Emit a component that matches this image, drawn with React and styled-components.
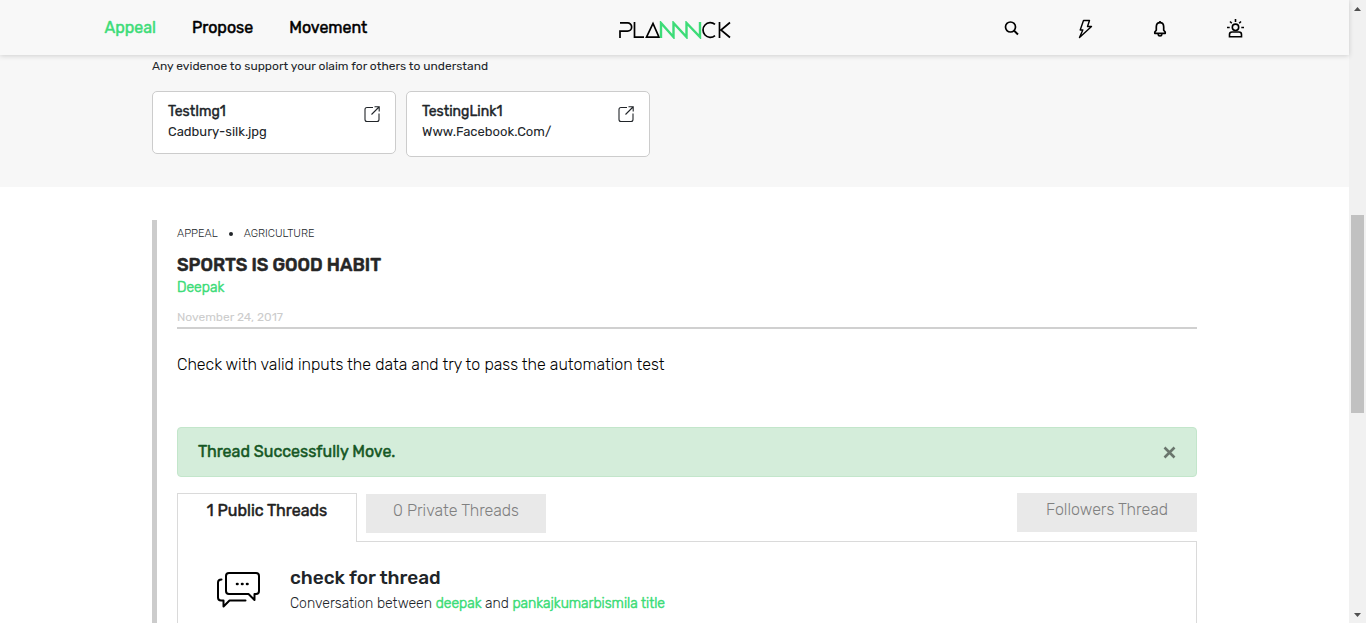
import React from "react";
import styled, { createGlobalStyle, css } from "styled-components";

const GlobalStyle = createGlobalStyle`
  *, *::before, *::after { box-sizing: border-box; }
  body {
    margin: 0;
    background: #fff;
    color: #212529;
    font-family: Rubik, Inter, Roboto, sans-serif;
    font-size: 16px;
    line-height: 24px;
  }
  h1, h2, h3, p { margin: 0; }
  a { color: inherit; text-decoration: none; }
  button { font: inherit; cursor: pointer; }
`;

const emphasis = css`
  font-weight: 400;
  -webkit-text-stroke: 0.03em currentColor;
`;

const lightEmphasis = css`
  font-weight: 300;
  -webkit-text-stroke: 0.04em currentColor;
`;

const Window = styled.div`
  display: flex;
  height: 100vh;
  overflow: hidden;
`;

const Page = styled.div`
  flex: 1;
  min-width: 0;
  display: flex;
  flex-direction: column;
`;

const Header = styled.header`
  flex: none;
  z-index: 1;
  background: #f8f8f8;
  box-shadow: 0 1px 5px rgba(0, 0, 0, 0.16);
`;

const HeaderInner = styled.div`
  display: grid;
  grid-template-columns: 1fr auto 1fr;
  align-items: center;
  max-width: 1140px;
  height: 55px;
  margin: 0 auto;
`;

const Nav = styled.nav`
  display: flex;
  gap: 36px;
`;

const NavLink = styled.a`
  color: ${(p) => (p.$active ? "#3ddc78" : "#000")};
  font-size: 16px;
  ${emphasis}
`;

const LogoLink = styled.a`
  display: flex;
  padding-top: 4px;
`;

const Tools = styled.div`
  display: flex;
  justify-content: flex-end;
  gap: 55px;
  padding-top: 2px;
`;

const IconButton = styled.button`
  display: flex;
  padding: 0;
  border: 0;
  background: none;
  color: #000;
`;

const Column = styled.div`
  max-width: 1045px;
  width: 100%;
  margin: 0 auto;
`;

const Evidence = styled.section`
  flex: none;
  padding-bottom: 30px;
  background: #f7f7f7;
`;

const Hint = styled.p`
  padding: 2px 0 16px;
  font-size: 12px;
  line-height: 18px;
`;

const Cards = styled.div`
  display: flex;
  align-items: flex-start;
  gap: 10px;
`;

const Card = styled.article`
  display: flex;
  justify-content: space-between;
  width: 244px;
  padding: ${(p) => (p.$tall ? "10px 15px 14px" : "10px 15px 11px")};
  border: 1px solid #ccc;
  border-radius: 5px;
  background: #fff;
`;

const CardTitle = styled.h3`
  font-size: 14px;
  line-height: 20px;
  ${emphasis}
`;

const CardText = styled.p`
  font-size: 13px;
  line-height: 20px;
`;

const OpenLink = styled.a`
  display: flex;
  padding-top: 3px;
`;

const Article = styled.article`
  flex: 1 0 auto;
  max-width: 1045px;
  width: 100%;
  margin: 33px auto 0;
  padding-left: 20px;
  border-left: 5px solid #ccc;
`;

const Crumbs = styled.div`
  display: flex;
  align-items: center;
  gap: 11px;
  padding-top: 6px;
  font-size: 11px;
  font-weight: 300;
  line-height: 16px;
`;

const Dot = styled.span`
  width: 4px;
  height: 4px;
  border-radius: 2px;
  background: #212529;
`;

const Title = styled.h1`
  padding-top: 11px;
  color: #262626;
  font-size: 18px;
  font-weight: 500;
  -webkit-text-stroke: 0.03em currentColor;
  line-height: 24px;
`;

const Author = styled.a`
  display: block;
  padding-top: 1px;
  color: #3ddc78;
  font-size: 14px;
  line-height: 20px;
  ${lightEmphasis}
`;

const PostDate = styled.time`
  display: block;
  padding: 10px 0 1px;
  border-bottom: 2px solid #d0d0d0;
  color: #ccc;
  font-size: 12px;
  line-height: 18px;
`;

const Body = styled.p`
  padding: 24px 0 50px;
  color: #000;
  font-size: 16px;
  font-weight: 300;
`;

const Alert = styled.div`
  display: flex;
  align-items: center;
  justify-content: space-between;
  height: 50px;
  margin-bottom: 16px;
  padding: 0 20px;
  border: 1px solid #c3e6cb;
  border-radius: 4px;
  background: #d4edda;
  color: #155724;
  ${emphasis}
`;

const Close = styled.button`
  display: flex;
  padding: 0;
  border: 0;
  background: none;
  color: #6a766d;
`;

const Tabs = styled.div`
  display: flex;
  align-items: flex-start;
  gap: 9px;
`;

const Tab = styled.button`
  width: 180px;
  height: ${(p) => (p.$active ? "49px" : "39px")};
  margin: ${(p) => (p.$active ? "0 0 -1px" : p.$end ? "0 0 0 auto" : "1px 0 0")};
  padding: ${(p) => (p.$active ? "5px 0 19px" : "5px 0 10px")};
  border: ${(p) => (p.$active ? "1px solid #dadada" : "0")};
  border-bottom: 0;
  background: ${(p) => (p.$active ? "#fff" : "#e9e9e9")};
  color: ${(p) => (p.$active ? "#212121" : "#808080")};
  font-weight: 300;
  z-index: ${(p) => (p.$active ? 1 : 0)};
  ${(p) => p.$active && emphasis}
`;

const Panel = styled.div`
  display: flex;
  gap: 29px;
  min-height: 160px;
  padding: 22px 39px;
  border: 1px solid #dadada;
`;

const ChatIcon = styled.svg`
  flex: none;
  margin-top: 8px;
`;

const ThreadTitle = styled.h2`
  font-size: 19px;
  font-weight: 500;
  line-height: 28px;
`;

const ThreadText = styled.p`
  color: #212529;
  font-size: 14px;
  font-weight: 300;
`;

const Person = styled.a`
  color: #3ddc78;
  ${lightEmphasis}
`;

const ScrollBar = styled.div`
  flex: none;
  display: flex;
  flex-direction: column;
  justify-content: space-between;
  align-items: center;
  width: 17px;
  background: #f1f1f1;
`;

const Thumb = styled.div`
  width: 13px;
  height: 198px;
  margin-top: 4px;
  background: #c1c1c1;
`;

const Arrow = styled.svg`
  display: block;
`;

function Logo() {
  return (
    <svg width="112" height="18" viewBox="0 0 112 18" fill="none" strokeWidth="1.7" role="img" aria-label="Plannnck">
      <g stroke="#000">
        <path d="M1 17V10.200H8.500a4 4 0 0 0 0-8.300H1" />
        <path d="M15.500 1V16.200H25" />
        <path d="M27.500 16.200L34 2.500L40 16.200Z" />
        <path d="M96 3.400A7.300 7.300 0 1 0 96 14.600" />
        <path d="M100.500 1V17M111 1.500L102 9L111 16.500" />
      </g>
      <path stroke="#3ddc78" strokeWidth="2.400" d="M42 17V2L54.500 16V2L67.500 16V2L81 16V1" />
    </svg>
  );
}

function SearchIcon() {
  return (
    <svg width="20" height="20" viewBox="0 0 20 20" fill="none" stroke="currentColor" strokeWidth="1.700">
      <circle cx="10.500" cy="8" r="5" />
      <path d="M14 11.600L18 15.500" strokeWidth="2" />
    </svg>
  );
}

function BoltIcon() {
  return (
    <svg width="20" height="20" viewBox="0 0 20 20" fill="none" stroke="currentColor" strokeWidth="1.400" strokeLinejoin="round">
      <path d="M8.500 1.500H14.500L12.500 7.500H16.500L4.500 18.500L7.800 11H5.200Z" />
    </svg>
  );
}

function BellIcon() {
  return (
    <svg width="20" height="20" viewBox="0 0 20 20" fill="none" stroke="currentColor" strokeWidth="1.700" strokeLinejoin="round">
      <path d="M4.800 14.300V13L6.300 11.300V8C6.300 5.200 7.800 3.700 10 3.700S13.700 5.200 13.700 8V11.300L15.200 13V14.300Z" />
      <path d="M8 15.200Q8.300 17 10 17T12 15.200" />
      <path d="M10 2V4" />
    </svg>
  );
}

function ProfileIcon() {
  return (
    <svg width="20" height="20" viewBox="0 0 20 20" fill="none" stroke="currentColor" strokeWidth="1.600">
      <circle cx="10.500" cy="8.300" r="3.200" />
      <path d="M4.500 17.800V15.500Q4.500 13 7 13H14Q16.500 13 16.500 15.500V17.800Z" />
      <path d="M10.500 0V3M5 2.500L6.800 4.300M16 2.500L14.200 4.300M2 8.500H4.700M16.300 8.500H19" />
    </svg>
  );
}

function OpenIcon() {
  return (
    <svg width="16" height="18" viewBox="0 0 16 18" fill="none" stroke="#212529" strokeWidth="1.100">
      <path d="M9 2.500H3Q1 2.500 1 4.500V14.500Q1 16.500 3 16.500H13Q15 16.500 15 14.500V8.500" />
      <path d="M7.500 9.500L15 2M10.500 1.800H15.200V6.500" />
    </svg>
  );
}

const evidence = [
  { title: "TestImg1", text: "Cadbury-silk.jpg" },
  { title: "TestingLink1", text: "Www.Facebook.Com/", tall: true },
];

export default function App() {
  return (
    <Window>
      <GlobalStyle />
      <Page>
        <Header>
          <HeaderInner>
            <Nav>
              <NavLink href="#appeal" $active>Appeal</NavLink>
              <NavLink href="#propose">Propose</NavLink>
              <NavLink href="#movement">Movement</NavLink>
            </Nav>
            <LogoLink href="#home"><Logo /></LogoLink>
            <Tools>
              <IconButton aria-label="Search"><SearchIcon /></IconButton>
              <IconButton aria-label="Activity"><BoltIcon /></IconButton>
              <IconButton aria-label="Notifications"><BellIcon /></IconButton>
              <IconButton aria-label="Profile"><ProfileIcon /></IconButton>
            </Tools>
          </HeaderInner>
        </Header>

        <Evidence>
          <Column>
            <Hint>Any evidenoe to support your olaim for others to understand</Hint>
            <Cards>
              {evidence.map((e) => (
                <Card key={e.title} $tall={e.tall}>
                  <div>
                    <CardTitle>{e.title}</CardTitle>
                    <CardText>{e.text}</CardText>
                  </div>
                  <OpenLink href="#open" aria-label={"Open " + e.title}><OpenIcon /></OpenLink>
                </Card>
              ))}
            </Cards>
          </Column>
        </Evidence>

        <Article>
          <Crumbs>
            <span>APPEAL</span>
            <Dot />
            <span>AGRICULTURE</span>
          </Crumbs>
          <Title>SPORTS IS GOOD HABIT</Title>
          <Author href="#deepak">Deepak</Author>
          <PostDate dateTime="2017-11-24">November 24, 2017</PostDate>
          <Body>Check with valid inputs the data and try to pass the automation test</Body>

          <Alert role="alert">
            <span>Thread Successfully Move.</span>
            <Close aria-label="Close">
              <svg width="13" height="13" viewBox="0 0 13 13" stroke="currentColor" strokeWidth="2.600">
                <path d="M1.500 1.500L11.500 11.500M11.500 1.500L1.500 11.500" />
              </svg>
            </Close>
          </Alert>

          <Tabs>
            <Tab $active>1 Public Threads</Tab>
            <Tab>0 Private Threads</Tab>
            <Tab $end>Followers Thread</Tab>
          </Tabs>
          <Panel>
            <ChatIcon width="44" height="37" viewBox="0 0 44 37" fill="none" stroke="#000" strokeWidth="2" strokeLinejoin="round" strokeLinecap="round">
              <path d="M12 1H39Q42 1 42 4V19Q42 22 39 22H37.500V28L31.500 22H12Q9 22 9 19V4Q9 1 12 1Z" />
              <path d="M4.500 7.500Q1 7.500 1 10.500V25.500Q1 28.500 4 28.500H6.500V34.500L12.500 28.500H28.500" />
              <path d="M20 12H20.500M25 12H25.500M30 12H30.500" strokeWidth="2.600" />
            </ChatIcon>
            <div>
              <ThreadTitle>check for thread</ThreadTitle>
              <ThreadText>
                Conversation between <Person href="#deepak">deepak</Person> and{" "}
                <Person href="#title">pankajkumarbismila title</Person>
              </ThreadText>
            </div>
          </Panel>
        </Article>
      </Page>

      <ScrollBar aria-hidden="true">
        <Arrow width="17" height="17" viewBox="0 0 17 17"><path fill="#505050" d="M5 11L8.500 7L12 11Z" /></Arrow>
        <Thumb />
        <Arrow width="17" height="17" viewBox="0 0 17 17"><path fill="#505050" d="M5 7L8.500 11L12 7Z" /></Arrow>
      </ScrollBar>
    </Window>
  );
}
